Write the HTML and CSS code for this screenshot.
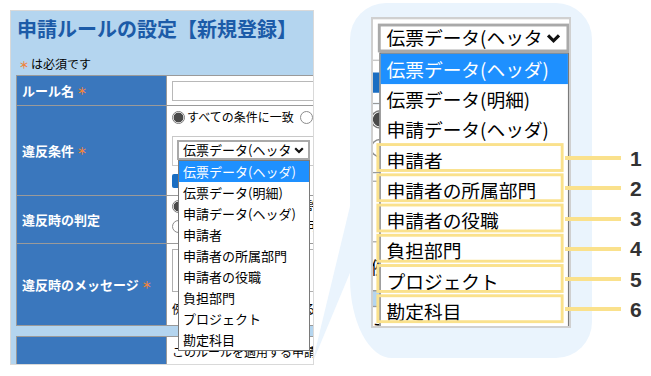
FILE: index.html
```html
<!DOCTYPE html>
<html lang="ja">
<head>
<meta charset="utf-8">
<title>申請ルールの設定</title>
<link rel="stylesheet" href="styles.css">
</head>
<body>
<svg class="bubble" width="651" height="376" viewBox="0 0 651 376" aria-hidden="true">
  <path d="M386,3 H556 A36,36 0 0 1 592,39 V322 A36,36 0 0 1 556,358 H392 A42,80 0 0 1 350,278 V39 A36,36 0 0 1 386,3 Z" fill="#eaf4fd"/>
  <polygon points="352,198 352,268 312,364" fill="#eaf4fd"/>
</svg>
<div class="page">
  <section class="panel">
    <h1 class="title">申請ルールの設定【新規登録】</h1>
    <p class="note"><span class="req">＊</span>は必須です</p>
    <div class="sheet">
      <div class="form">
        <div class="row r1">
          <div class="lbl">ルール名<span class="req">＊</span></div>
          <div class="val"><div class="input"></div></div>
        </div>
        <div class="row r2">
          <div class="lbl">違反条件<span class="req">＊</span></div>
          <div class="val">
            <div class="radios"><span class="radio on"></span>すべての条件に一致<span class="radio second"></span>いずれかの条件に一致</div>
            <div class="selbox">
              <div class="selwrap">
                <div class="select"><span>伝票データ(ヘッタ</span><svg class="chev" width="10" height="7" viewBox="0 0 10 7"><path d="M1.2 1.2 L5 5 L8.8 1.2" fill="none" stroke="#111" stroke-width="2.2"/></svg></div>
                <ul class="list">
                  <li class="sel">伝票データ(ヘッダ)</li>
                  <li>伝票データ(明細)</li>
                  <li>申請データ(ヘッダ)</li>
                  <li>申請者</li>
                  <li>申請者の所属部門</li>
                  <li>申請者の役職</li>
                  <li>負担部門</li>
                  <li>プロジェクト</li>
                  <li>勘定科目</li>
                </ul>
              </div>
            </div>
            <div class="checkline"><span class="check"></span>条件を追加する</div>
          </div>
        </div>
        <div class="row r3">
          <div class="lbl">違反時の判定</div>
          <div class="val">
            <div class="rline"><span class="radio on"></span>警告を表示して申請を許可する</div>
            <div class="rline"><span class="radio"></span>エラーとして申請を不可にする</div>
          </div>
        </div>
        <div class="row r4">
          <div class="lbl">違反時のメッセージ<span class="req">＊</span></div>
          <div class="val">
            <div class="textarea"></div>
            <p class="example">例：上限金額を超えている場合は承認できません</p>
          </div>
        </div>
      </div>
      <div class="form form2">
        <div class="row r5">
          <div class="lbl"></div>
          <div class="val"><p class="apply">このルールを適用する申請</p></div>
        </div>
      </div>
    </div>
  </section>

  <section class="mag">
    <div class="sheet">
      <div class="form">
        <div class="row r1">
          <div class="lbl">ルール名<span class="req">＊</span></div>
          <div class="val"><div class="input"></div></div>
        </div>
        <div class="row r2">
          <div class="lbl">違反条件<span class="req">＊</span></div>
          <div class="val">
            <div class="radios"><span class="radio on"></span>すべての条件に一致<span class="radio second"></span>いずれかの条件に一致</div>
            <div class="selbox">
              <div class="selwrap">
                <div class="select"><span>伝票データ(ヘッタ</span><svg class="chev" width="10" height="7" viewBox="0 0 10 7"><path d="M1.2 1.2 L5 5 L8.8 1.2" fill="none" stroke="#111" stroke-width="2.2"/></svg></div>
                <ul class="list">
                  <li class="sel">伝票データ(ヘッダ)</li>
                  <li>伝票データ(明細)</li>
                  <li>申請データ(ヘッダ)</li>
                  <li class="mark">申請者</li>
                  <li class="mark">申請者の所属部門</li>
                  <li class="mark">申請者の役職</li>
                  <li class="mark">負担部門</li>
                  <li class="mark">プロジェクト</li>
                  <li class="mark">勘定科目</li>
                </ul>
              </div>
            </div>
            <div class="checkline"><span class="check"></span>条件を追加する</div>
          </div>
        </div>
        <div class="row r3">
          <div class="lbl">違反時の判定</div>
          <div class="val">
            <div class="rline"><span class="radio on"></span>警告を表示して申請を許可する</div>
            <div class="rline"><span class="radio"></span>エラーとして申請を不可にする</div>
          </div>
        </div>
        <div class="row r4">
          <div class="lbl">違反時のメッセージ<span class="req">＊</span></div>
          <div class="val">
            <div class="textarea"></div>
            <p class="example">例：上限金額を超えている場合は承認できません</p>
          </div>
        </div>
      </div>
      <div class="form form2">
        <div class="row r5">
          <div class="lbl"></div>
          <div class="val"><p class="apply">このルールを適用する申請</p></div>
        </div>
      </div>
    </div>
  </section>

  <div class="callouts">
    <div class="co"><span class="co-line"></span><span class="co-num">1</span></div>
    <div class="co"><span class="co-line"></span><span class="co-num">2</span></div>
    <div class="co"><span class="co-line"></span><span class="co-num">3</span></div>
    <div class="co"><span class="co-line"></span><span class="co-num">4</span></div>
    <div class="co"><span class="co-line"></span><span class="co-num">5</span></div>
    <div class="co"><span class="co-line"></span><span class="co-num">6</span></div>
  </div>
</div>
</body>
</html>
```

FILE: styles.css
```css
* { box-sizing: border-box; }
html, body { margin: 0; padding: 0; background: #fff; }
body {
  width: 651px; height: 376px; overflow: hidden; position: relative;
  font-family: "Noto Sans CJK JP", "Noto Sans", sans-serif; color: #000;
}
.bubble { position: absolute; left: 0; top: 0; z-index: 0; }
.page { position: relative; z-index: 1; display: flex; align-items: flex-start; }

/* left screenshot panel */
.panel {
  flex: none; width: 304px; height: 355px; margin: 10px 0 0 10px;
  background: #b4d5ef; border: 1px solid #d9d9d9; overflow: hidden;
}
.title {
  margin: 0; padding: 6px 0 0 6px; font-size: 20px; line-height: 23px;
  font-weight: 700; color: #1c5ba8; white-space: nowrap;
}
.note { margin: 16px 0 0; padding-left: 8px; font-size: 12px; line-height: 16px; white-space: nowrap; }
.req { color: #f0843c; font-size: 10px; font-weight: 700; margin-right: 2px; }
.lbl .req { margin: 0 0 0 3px; }

.sheet { width: 420px; }
.panel .sheet { margin: 2px 0 0 5px; }

.form { border-top: 1px solid #9a9a9a; border-left: 1px solid #9a9a9a; }
.form2 { margin-top: 10px; }
.row { display: flex; border-bottom: 1px solid #9a9a9a; }
.r1 { height: 30px; }
.r2 { height: 90px; }
.r3 { height: 48px; }
.r4 { height: 82px; }
.r5 { height: 40px; border-bottom: 0; }
.lbl {
  flex: none; width: 150px; background: #3a77bd; border-right: 1px solid #9a9a9a;
  color: #fff; font-weight: 700; font-size: 13px; line-height: 16px;
  display: flex; align-items: center; padding-left: 5px; white-space: nowrap;
}
.val { flex: 1; background: #fff; padding-left: 5px; font-size: 12px; line-height: 16px; white-space: nowrap; }

.input { margin-top: 5px; height: 20px; width: 300px; border: 1px solid #b8b8b8; }

.r2 .val { padding-top: 4px; }
.radios { display: flex; align-items: center; height: 14px; line-height: 14px; }
.radio {
  flex: none; width: 13px; height: 13px; border-radius: 50%;
  border: 1px solid #8c8c8c; background: #fff; margin-right: 2px;
}
.radio.on { background: radial-gradient(circle, #4a4a4a 0 4.6px, #fff 5.2px); border-color: #7a7a7a; }
.radio.second { margin-left: 6px; }

.selbox { margin-top: 12px; height: 30px; width: 300px; border: 1px solid #c8c8c8; padding: 3px 0 0 4px; }
.selwrap { position: relative; width: 133px; }
.select {
  height: 20px; border: 2px solid #a9a9a9; background: #fff;
  display: flex; align-items: center; justify-content: space-between;
  padding: 0 4px; font-size: 13px; line-height: 16px;
}
.chev { display: block; flex: none; }
.list {
  position: absolute; z-index: 5; left: 1px; top: 100%; width: 132px;
  margin: 0; padding: 0; list-style: none; background: #fff;
  border: 1px solid #7a7a7a; font-size: 13px;
}
.list li { position: relative; height: 21px; line-height: 21px; padding-left: 4px; white-space: nowrap; }
.list li.sel { background: #1e90ff; color: #fff; }
.list li.mark::after {
  content: ""; position: absolute; left: -3px; right: 3px; top: -1px; bottom: 2px;
  border: 2px solid #fae18c;
}

.checkline { margin-top: 8px; display: flex; align-items: center; height: 14px; }
.check { width: 14px; height: 14px; border-radius: 2px; background: #1b6ec2; margin-right: 3px; }

.rline { display: flex; align-items: center; height: 20px; }

.r4 .val { padding-top: 5px; }
.textarea { height: 43px; width: 300px; border: 1px solid #b0b0b0; }
.example { margin: 9px 0 0; }
.apply { margin: 7px 0 0; }

/* magnified crop */
.mag {
  flex: none; width: 200px; height: 311px; margin: 17px 0 0 57px;
  border: 2px solid #d0d0d0; background: #fff; overflow: hidden;
}
.mag .sheet {
  margin: -88.6px 0 0 -226.8px; transform: scale(1.44); transform-origin: 0 0;
  background: #b4d5ef;
}

/* numbered callouts */
.callouts { flex: none; position: relative; z-index: 2; margin: 143px 0 0 -6px; display: flex; flex-direction: column; }
.co { height: 30.24px; display: flex; align-items: center; gap: 9px; }
.co-line { width: 56px; height: 4px; background: #fae18c; }
.co-num { font-family: "Liberation Sans", Arial, sans-serif; font-weight: 700; font-size: 21px; line-height: 1; color: #333; }
```
